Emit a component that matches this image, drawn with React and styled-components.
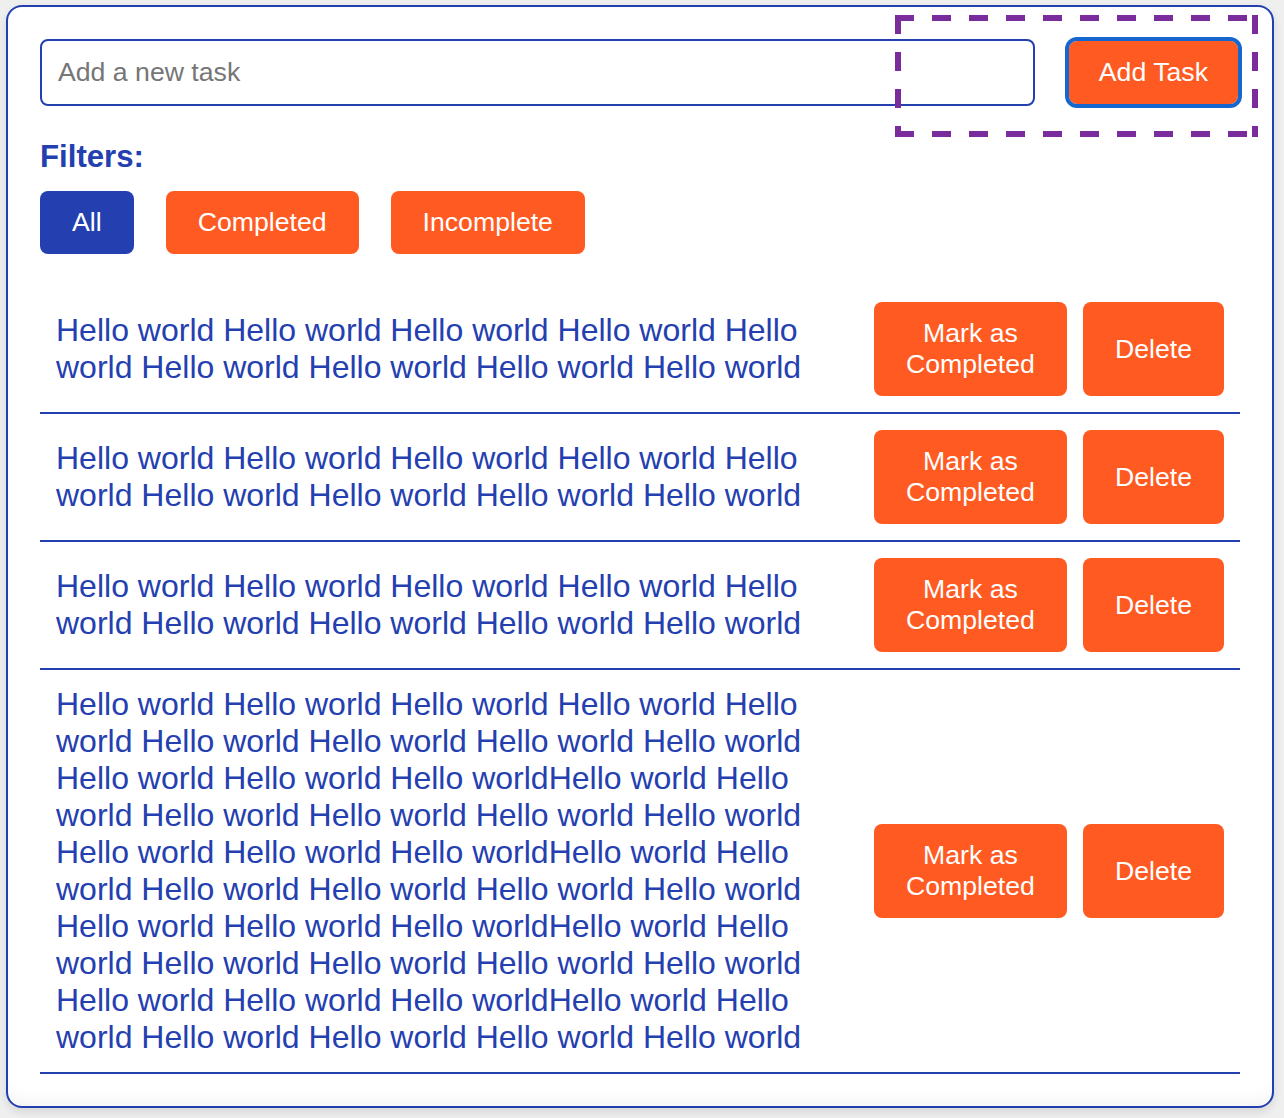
import React from "react";
import styled, { createGlobalStyle } from "styled-components";

const BLUE = "#2440b0";
const ORANGE = "#fe5a22";
const RING = "#1666d0";
const PURPLE = "#7b2c9c";

const GlobalStyle = createGlobalStyle`
  html, body {
    margin: 0;
    padding: 0;
    background: #efefef;
    font-family: "Liberation Sans", Arial, Helvetica, sans-serif;
  }
  * { box-sizing: border-box; }
`;

const Card = styled.div`
  position: relative;
  margin: 5px 10px 10px 6px;
  padding: 32px;
  background: #ffffff;
  border: 2px solid ${BLUE};
  border-radius: 16px;
  box-shadow: 0 4px 10px rgba(0, 0, 0, 0.1),
    inset 0 -14px 18px -10px rgba(0, 0, 0, 0.05);
`;

const dashH = `repeating-linear-gradient(90deg, ${PURPLE} 0 19px, transparent 19px 37px)`;
const dashV = `repeating-linear-gradient(180deg, ${PURPLE} 0 19px, transparent 19px 37px)`;

const Highlight = styled.div`
  position: absolute;
  top: 8px;
  right: 14px;
  width: 363px;
  height: 122px;
  pointer-events: none;
  background-image: ${dashH}, ${dashH}, ${dashV}, ${dashV};
  background-size: 100% 6px, 100% 6px, 6px 100%, 6px 100%;
  background-position: left top, left bottom, left top, right top;
  background-repeat: no-repeat;
`;

const TaskForm = styled.form`
  display: flex;
  align-items: center;
  gap: 34px;
  margin: 0;
`;

const TaskInput = styled.input`
  flex: 1;
  min-width: 0;
  padding: 16px;
  font-family: inherit;
  font-size: 26.67px;
  line-height: normal;
  color: #222;
  background: #fff;
  border: 2px solid ${BLUE};
  border-radius: 8px;
  outline: none;
  &::placeholder {
    color: #767676;
  }
`;

const AddButton = styled.button`
  margin-right: 2px;
  padding: 16px 30px;
  font-family: inherit;
  font-size: 26.67px;
  line-height: normal;
  color: #fff;
  background: ${ORANGE};
  border: none;
  border-radius: 8px;
  outline: 4px solid ${RING};
  cursor: pointer;
`;

const FiltersTitle = styled.h3`
  margin: 33px 0 16px;
  font-size: 31.2px;
  font-weight: bold;
  line-height: normal;
  color: ${BLUE};
`;

const FilterBar = styled.div`
  display: flex;
  gap: 32px;
`;

const FilterButton = styled.button`
  padding: 16px 32px;
  font-family: inherit;
  font-size: 26.67px;
  line-height: normal;
  color: #fff;
  background: ${(p) => (p.$active ? BLUE : ORANGE)};
  border: none;
  border-radius: 8px;
  cursor: pointer;
`;

const TaskList = styled.ul`
  margin: 32px 0 0;
  padding: 0;
  list-style: none;
`;

const TaskItem = styled.li`
  display: flex;
  align-items: center;
  gap: 64px;
  padding: 16px;
  border-bottom: 2px solid ${BLUE};
`;

const TaskText = styled.span`
  flex: 1;
  min-width: 0;
  font-size: 32px;
  line-height: normal;
  color: ${BLUE};
`;

const Actions = styled.div`
  flex: none;
  display: flex;
  gap: 16px;
`;

const ActionButton = styled.button`
  width: ${(p) => (p.$wide ? "193px" : "auto")};
  padding: 16px 32px;
  font-family: inherit;
  font-size: 26.67px;
  line-height: normal;
  color: #fff;
  background: ${ORANGE};
  border: none;
  border-radius: 8px;
  cursor: pointer;
`;

const SHORT =
  "Hello world Hello world Hello world Hello world Hello world Hello world Hello world Hello world Hello world";

const L2 = "world Hello world Hello world Hello world Hello world";
const L3 = "Hello world Hello world Hello worldHello world Hello";
const LONG = [
  "Hello world Hello world Hello world Hello world Hello",
  L2,
  L3,
  L2,
  L3,
  L2,
  L3,
  L2,
  L3,
  L2,
].join(" ");

const tasks = [SHORT, SHORT, SHORT, LONG];

export default function App() {
  return (
    <>
      <GlobalStyle />
      <Card>
        <TaskForm onSubmit={(e) => e.preventDefault()}>
          <TaskInput type="text" placeholder="Add a new task" />
          <AddButton type="submit">Add Task</AddButton>
        </TaskForm>
        <FiltersTitle>Filters:</FiltersTitle>
        <FilterBar>
          <FilterButton $active>All</FilterButton>
          <FilterButton>Completed</FilterButton>
          <FilterButton>Incomplete</FilterButton>
        </FilterBar>
        <TaskList>
          {tasks.map((t, i) => (
            <TaskItem key={i}>
              <TaskText>{t}</TaskText>
              <Actions>
                <ActionButton $wide>Mark as Completed</ActionButton>
                <ActionButton>Delete</ActionButton>
              </Actions>
            </TaskItem>
          ))}
        </TaskList>
        <Highlight />
      </Card>
    </>
  );
}
